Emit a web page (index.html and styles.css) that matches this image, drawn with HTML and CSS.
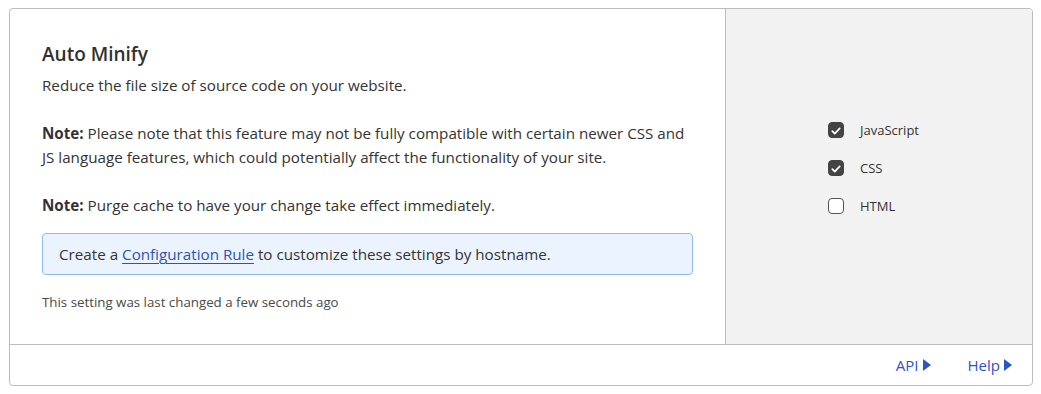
FILE: index.html
```html
<!DOCTYPE html>
<html>
<head>
    <title>Auto Minify</title>
    <link rel="stylesheet" href="styles.css">
</head>
<body>
    <div class="card">
        <div class="card-body">
            <div class="main">
                <h2 class="title">Auto Minify</h2>
                <p>Reduce the file size of source code on your website.</p>
                <p><b>Note:</b> Please note that this feature may not be fully compatible with certain newer CSS and JS language features, which could potentially affect the functionality of your site.</p>
                <p><b>Note:</b> Purge cache to have your change take effect immediately.</p>
                <div class="info">Create a <a href="#">Configuration Rule</a> to customize these settings by hostname.</div>
                <div class="meta">This setting was last changed a few seconds ago</div>
            </div>
            <div class="side">
                <label class="opt"><span class="box checked"><svg viewBox="0 0 16 16" width="16" height="16"><path d="M3.8 8.2l2.8 2.7 5.6-5.8" fill="none" stroke="#fff" stroke-width="2" stroke-linecap="round" stroke-linejoin="round"/></svg></span>JavaScript</label>
                <label class="opt"><span class="box checked"><svg viewBox="0 0 16 16" width="16" height="16"><path d="M3.8 8.2l2.8 2.7 5.6-5.8" fill="none" stroke="#fff" stroke-width="2" stroke-linecap="round" stroke-linejoin="round"/></svg></span>CSS</label>
                <label class="opt"><span class="box"></span>HTML</label>
            </div>
        </div>
        <div class="card-foot">
            <a href="#">API<span class="tri"></span></a>
            <a href="#">Help<span class="tri"></span></a>
        </div>
    </div>
</body>
</html>
```

FILE: styles.css
```css
body { margin: 0; padding: 8px 9px; font-family: "Open Sans", "Noto Sans", sans-serif; color: #333; background: #fff; }
.card { width: 1024px; height: 378px; box-sizing: border-box; border: 1px solid #bcbcbc; border-radius: 4px; display: flex; flex-direction: column; overflow: hidden; }
.card-body { display: flex; height: 336px; border-bottom: 1px solid #bcbcbc; box-sizing: border-box; }
.main { width: 716px; box-sizing: border-box; padding: 33px 32px 0 32px; border-right: 1px solid #bcbcbc; }
.title { margin: 0 0 7px; font-size: 19px; font-weight: 600; line-height: 24px; color: #313131; }
.main p { margin: 0 0 24px; font-size: 15.2px; line-height: 24px; }
.info { width: 651px; height: 42px; box-sizing: border-box; margin-top: -8px; padding: 0 16px; display: flex; align-items: center; background: #ebf3fe; border: 1px solid #8ebaf2; border-radius: 4px; font-size: 15.2px; }
.info a { color: #2c53b5; text-decoration: underline; text-underline-offset: 3px; margin: 0 4px; }
.meta { margin-top: 18px; font-size: 13.3px; color: #4a4a4a; }
.side { flex: 1; background: #f2f2f2; padding: 113px 0 0 102px; display: flex; flex-direction: column; gap: 22px; }
.opt { display: flex; align-items: center; gap: 16px; font-size: 13px; color: #333; line-height: 16px; }
.box { width: 16px; height: 16px; box-sizing: border-box; border-radius: 4px; border: 1px solid #555; background: #fff; display: flex; }
.box.checked { background: #444; border-color: #444; }
.card-foot { flex: 1; display: flex; justify-content: flex-end; align-items: center; gap: 37px; padding-right: 20px; }
.card-foot a { color: #2c53c8; text-decoration: none; font-size: 15px; display: flex; align-items: center; gap: 4px; }
.tri { width: 0; height: 0; border-top: 6px solid transparent; border-bottom: 6px solid transparent; border-left: 8px solid #2c53c8; }
```
